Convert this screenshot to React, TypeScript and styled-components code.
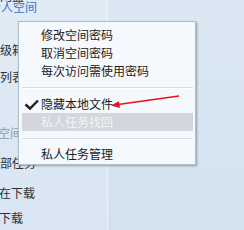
import React from 'react';
import styled, {createGlobalStyle} from "styled-components";

const GlobalStyle = createGlobalStyle`
  html, body {
    margin: 0;
    padding: 0;
  }
  body {
    width: 244px;
    height: 230px;
    overflow: hidden;
    font-family: "Noto Sans CJK SC", "Noto Sans", sans-serif;
    background: linear-gradient(180deg, #dbe7f3 0%, #d4e2f0 100%);
  }
`;

interface SideRow {
  text: string,
  top: number,
  cut: number,
  tone: 'active' | 'normal' | 'muted',
}

const sideRows: SideRow[] = [
  {text: '我的网盘', top: -12, cut: 24, tone: 'normal'},
  {text: '个人空间', top: -5, cut: 11, tone: 'active'},
  {text: '超级箱', top: 27, cut: 12, tone: 'normal'},
  {text: '文件列表', top: 11, cut: 24, tone: 'normal'},
  {text: '私密空间', top: 40, cut: 26, tone: 'muted'},
  {text: '全部任务', top: 14, cut: 12, tone: 'normal'},
  {text: '正在下载', top: 14, cut: 13, tone: 'normal'},
  {text: '已下载', top: 9, cut: 13, tone: 'normal'},
];

interface MenuEntry {
  label?: string,
  checked?: boolean,
  disabled?: boolean,
  separator?: boolean,
}

const menuEntries: MenuEntry[] = [
  {label: '修改空间密码'},
  {label: '取消空间密码'},
  {label: '每次访问需使用密码'},
  {separator: true},
  {label: '隐藏本地文件', checked: true},
  {label: '私人任务找回', disabled: true},
  {separator: true},
  {label: '私人任务管理'},
];

const toneColor = {
  active: '#2b78cc',
  normal: '#2a2f36',
  muted: '#8c9bab',
};

const App: React.FC = () => {
  return (
    <>
      <GlobalStyle/>
      <Page>
        <Sidebar>
          {sideRows.map(row =>
            <SideItem key={row.text} $top={row.top} $cut={row.cut} $color={toneColor[row.tone]}>
              {row.text}
            </SideItem>
          )}
        </Sidebar>
        <Main/>

        <ContextMenu>
          {menuEntries.map((entry, i) =>
            entry.separator
              ? <Separator key={i}/>
              : <MenuItem key={i} $disabled={entry.disabled}>
                  {entry.checked &&
                    <CheckIcon width="16" height="12" viewBox="0 0 16 12">
                      <path d="M1.5 5.5 L6 9.5 L14 1.5" fill="none" stroke="#1e2226" strokeWidth="2.4"/>
                    </CheckIcon>
                  }
                  {entry.label}
                </MenuItem>
          )}
        </ContextMenu>

        {/* red annotation arrow drawn over the menu */}
        <Arrow width="244" height="230" viewBox="0 0 244 230">
          <line x1="179" y1="96" x2="118" y2="104.5" stroke="#e2141c" strokeWidth="1.6"/>
          <polygon points="111,105.5 119,101.2 120,108" fill="#e2141c"/>
        </Arrow>
      </Page>
    </>
  );
};

const Page = styled.div`
  position: relative;
  display: flex;
  width: 244px;
  height: 230px;
  overflow: hidden;
`;

const Sidebar = styled.div`
  display: flex;
  flex-direction: column;
  width: 107px;
  flex-shrink: 0;
  overflow: hidden;
  border-right: 1px solid rgba(255, 255, 255, 0.45);
  background: linear-gradient(180deg, #e0ebf5 0%, #d9e5f2 100%);
`;

const SideItem = styled.div<{$top: number, $cut: number, $color: string}>`
  height: 16px;
  line-height: 16px;
  flex-shrink: 0;
  margin-top: ${props => props.$top}px;
  margin-left: -${props => props.$cut}px;
  font-size: 12px;
  white-space: nowrap;
  color: ${props => props.$color};
`;

const Main = styled.div`
  flex: 1;
`;

const ContextMenu = styled.div`
  position: absolute;
  left: 18px;
  top: 21px;
  box-sizing: border-box;
  width: 178px;
  height: 144px;
  padding: 4px 1px 1px 1px;
  display: flex;
  flex-direction: column;
  background: #f5f8fc;
  border: 1px solid #b3bdc8;
  box-shadow: 1px 1px 2px rgba(60, 70, 80, 0.45);
`;

const MenuItem = styled.div<{$disabled?: boolean}>`
  position: relative;
  height: 18px;
  line-height: 18px;
  margin: 0 1px 0 2px;
  padding-left: 19px;
  font-size: 12px;
  white-space: nowrap;
  color: ${props => props.$disabled ? '#f1f3f5' : '#1b1d20'};
  background: ${props => props.$disabled ? '#d3d7dd' : 'transparent'};
`;

const CheckIcon = styled.svg`
  position: absolute;
  left: 2px;
  top: 4px;
`;

const Separator = styled.div`
  height: 15px;
  margin: 0 1px 0 2px;
  &::before {
    content: "";
    display: block;
    margin-top: 7px;
    height: 1px;
    background: #d6dce3;
    border-bottom: 1px solid #ffffff;
  }
`;

const Arrow = styled.svg`
  position: absolute;
  left: 0;
  top: 0;
  pointer-events: none;
`;

export default App;
